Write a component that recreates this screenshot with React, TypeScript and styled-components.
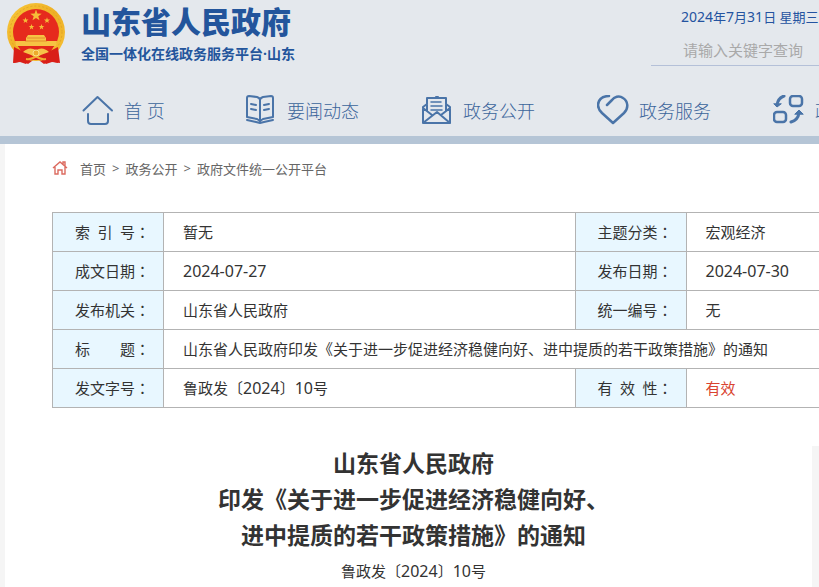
import React from 'react';
import styled, { createGlobalStyle } from 'styled-components';

const GlobalStyle = createGlobalStyle`
  *, *::before, *::after { box-sizing: border-box; }
  html { min-height: 100%; background: #f5f5f5; }
  body {
    margin: 0;
    overflow-x: hidden;
    color: #333;
    font-family: "Noto Sans", "Noto Sans CJK SC", sans-serif;
    font-size: 15px;
  }
  a { color: inherit; text-decoration: none; }
`;

const Header = styled.header`
  height: 144px;
  overflow: hidden;
  background: #e4e8ed;
  border-bottom: 8px solid #b5c5d6;
`;

const Masthead = styled.div`
  display: flex;
  justify-content: space-between;
  height: 80px;
  padding-left: 6px;
`;

const Brand = styled.a`
  display: flex;
  gap: 15px;
  padding-top: 2px;
  color: #23559c;
`;

const BrandText = styled.span`
  display: flex;
  flex-direction: column;
  white-space: nowrap;
`;

const BrandName = styled.strong`
  font-size: 30px;
  line-height: 40px;
  font-weight: 900;
`;

const BrandTagline = styled.span`
  font-size: 14px;
  line-height: 24px;
  font-weight: 700;
`;

const Tools = styled.div`
  width: 168px;
`;

const Today = styled.time`
  display: block;
  padding-left: 30px;
  color: #2453a0;
  font-size: 13px;
  line-height: 34px;
  white-space: nowrap;
`;

const DateFigures = styled.span`
  font-size: 14px;
`;

const SearchForm = styled.form`
  display: flex;
`;

const SearchInput = styled.input`
  width: 100%;
  height: 32px;
  padding: 0 0 0 32px;
  border: 0;
  border-bottom: 1px solid #b4c0d8;
  outline: 0;
  background: transparent;
  font: inherit;
  &::placeholder { color: #a9a9a9; opacity: 1; }
`;

const Nav = styled.nav`
  display: flex;
  gap: 62px;
  padding: 15px 0 0 82px;
`;

const NavItem = styled.a`
  display: flex;
  flex: none;
  align-items: center;
  gap: 10px;
  min-width: 101px;
  color: #3b659b;
  font-size: 18px;
  line-height: 32px;
  font-weight: 300;
  white-space: nowrap;
`;

const NavSvg = styled.svg`
  width: 32px;
  height: 32px;
  fill: none;
  stroke: #4a74a8;
  stroke-width: 2;
  stroke-linecap: round;
  stroke-linejoin: round;
`;

const Page = styled.div`
  min-height: 443px;
  margin-left: 5px;
  background: #fff;
`;

const Breadcrumb = styled.nav`
  display: flex;
  align-items: center;
  gap: 6px;
  height: 48px;
  padding-left: 47px;
  color: #666;
  font-size: 13px;
`;

const CrumbIcon = styled.svg`
  width: 16px;
  height: 16px;
  margin-right: 6px;
  fill: none;
  stroke: #dc6b60;
  stroke-width: 1.4;
`;

const InfoTable = styled.table`
  width: calc(100% - 47px);
  margin: 20px 0 0 47px;
  border-collapse: collapse;
  table-layout: fixed;
`;

const LabelCol = styled.col`
  width: 111px;
`;

const SideCol = styled.col`
  width: 133px;
`;

const LabelCell = styled.th`
  height: 39px;
  padding: 0 0 0 22px;
  border: 1px solid #b3b3b3;
  background: #e8f7ff;
  font-weight: 400;
  text-align: left;
  white-space: nowrap;
  line-height: 22px;
`;

const Colon = styled.span`
  font-family: "Noto Sans CJK TC", sans-serif;
`;

const Value = styled.td<{ $valid?: boolean }>`
  padding: 0 0 0 19px;
  border: 1px solid #b3b3b3;
  color: ${p => (p.$valid ? '#d9432f' : '#333')};
  white-space: nowrap;
  line-height: 22px;
  &:last-child { border-right: 0; }
`;

const Figures = styled.span`
  font-size: 16px;
`;

const Body = styled.div`
  display: flex;
  min-height: 141px;
  margin-top: 38px;
`;

const Article = styled.article`
  flex: 1;
  padding-left: 10px;
  text-align: center;
`;

const Title = styled.h1`
  margin: -1px 0 0;
  font-size: 23px;
  line-height: 36px;
  font-weight: 700;
`;

const DocNumber = styled.p`
  margin: 6px 0 0;
  line-height: 24px;
`;

const SidePanel = styled.aside`
  width: 7px;
  background: #f5f5f5;
`;

const star = (cx: number, cy: number, r: number) =>
  Array.from({ length: 10 }, (_, i) => {
    const a = -Math.PI / 2 + (i * Math.PI) / 5;
    const d = i % 2 ? r * 0.4 : r;
    return `${cx + d * Math.cos(a)},${cy + d * Math.sin(a)}`;
  }).join(' ');

const Emblem = () => (
  <svg width="60" height="64" viewBox="0 0 60 64" aria-hidden="true">
    <defs>
      <linearGradient id="gold" x1="0" y1="0" x2="1" y2="1">
        <stop offset="0" stopColor="#f8c83a" />
        <stop offset="0.5" stopColor="#eeb025" />
        <stop offset="1" stopColor="#f6c136" />
      </linearGradient>
    </defs>
    <path d="M9 44 L8 61 L17 59 L22 62 L30 56 L38 62 L44 59 L52 61 L51 44 Z" fill="#dc2018" />
    <circle cx="30" cy="30" r="29" fill="url(#gold)" />
    <circle cx="30" cy="30" r="26" fill="none" stroke="#e3a526" strokeWidth="1" strokeDasharray="2 2" />
    <circle cx="30" cy="30" r="23" fill="#e62a1d" />
    <g fill="#f5bd38">
      <polygon points={star(30, 13.5, 6)} />
      <polygon points={star(19.5, 18.5, 3.2)} />
      <polygon points={star(41, 18.5, 3.2)} />
      <polygon points={star(25.5, 25, 3)} />
      <polygon points={star(35.5, 25, 3)} />
    </g>
    <path d="M22 33 H38 L40 36 H40 V39 H51 L50 44 H10 L9 39 H20 V36 Z" fill="#f6c343" />
    <path d="M21 36 H39 M19 39 H41" stroke="#d9641f" strokeWidth="0.6" />
    <path d="M12 44 H48 L45 49 H15 Z" fill="#e3271a" />
    <path d="M8 45 L16 49 L23 47 L30 50 L37 47 L44 49 L52 45 L54 61 L46 60 L40 62 L36 58 H24 L20 62 L14 60 L7 61 Z" fill="#d91f18" />
    <path d="M17 50 Q23 44 30 48 Q37 44 43 50 Q36 52 30 56 Q24 52 17 50 Z" fill="#f6c348" />
    <path d="M20 57 Q26 58 30 54 Q34 58 40 57" fill="none" stroke="#f0ad30" strokeWidth="2" />
    <circle cx="30" cy="51" r="3" fill="#edaa2c" stroke="#fae08a" />
  </svg>
);

const HomeIcon = () => (
  <NavSvg viewBox="0 0 32 32" aria-hidden="true">
    <path d="M1.5 15.5 L15.5 2 L30 15.5 M6 19 V26 Q6 29 9 29 H23 Q26 29 26 26 V19" />
  </NavSvg>
);

const BookIcon = () => (
  <NavSvg viewBox="0 0 32 32" aria-hidden="true">
    <path d="M2 3 Q2 1 4 1 L12 2 Q15 3 15 5 Q15 3 18 2 L26 1 Q28 1 28 3 V22 L18 24 L15 26 L12 24 L2 22 Z M15 5 V25 M2 25 L11 27 L15 28 L19 27 L28 25" />
    <path d="M6 9 L11 10 M6 14 L11 15 M24 9 L19 10 M24 14 L19 15" />
  </NavSvg>
);

const LetterIcon = () => (
  <NavSvg viewBox="0 0 32 32" aria-hidden="true">
    <path d="M6 16 V3 H25 V16 M15 2 H17 M6 9 L2 12 V28 H29 V12 L25 9 M2 13 L11 20 M29 13 L20 20 M2 28 L16 17 L29 28" />
    <path d="M10 7 H20 M10 11 H21 M10 15 H21" strokeWidth="1.5" />
  </NavSvg>
);

const HeartIcon = () => (
  <NavSvg viewBox="0 0 32 32" aria-hidden="true">
    <path strokeWidth="2.5" d="M12 1 C4 1 1 6 1 10 C1 14 3 16 5 18 L16 28 L27 18 C32 13 31 6 26 3 C22 0 17 2 15 5 L10 10" />
  </NavSvg>
);

const ExchangeIcon = () => (
  <NavSvg viewBox="0 0 32 32" aria-hidden="true">
    <rect x="17" y="1" width="12" height="10" rx="3" strokeWidth="2.5" />
    <rect x="1" y="17" width="12" height="10" rx="3" strokeWidth="2.5" />
    <path d="M11 1 Q5 3 4 10 M18 27 Q25 25 26 18" strokeWidth="3" />
    <path d="M1 9 L4 12 L8 9 Z M22 19 L26 15 L30 19 Z" fill="#4a74a8" strokeWidth="1" />
  </NavSvg>
);

const navItems = [
  { label: '首 页', Icon: HomeIcon },
  { label: '要闻动态', Icon: BookIcon },
  { label: '政务公开', Icon: LetterIcon },
  { label: '政务服务', Icon: HeartIcon },
  { label: '政', Icon: ExchangeIcon },
];

const Label = ({ text }: { text: string }) => (
  <LabelCell scope="row">
    {text}
    <Colon>：</Colon>
  </LabelCell>
);

export default function App() {
  return (
    <>
      <GlobalStyle />
      <Header>
        <Masthead>
          <Brand href="#">
            <Emblem />
            <BrandText>
              <BrandName>山东省人民政府</BrandName>
              <BrandTagline>全国一体化在线政务服务平台·山东</BrandTagline>
            </BrandText>
          </Brand>
          <Tools>
            <Today dateTime="2024-07-31">
              <DateFigures>2024</DateFigures>年<DateFigures>7</DateFigures>月<DateFigures>31</DateFigures>日 星期三
            </Today>
            <SearchForm>
              <SearchInput type="search" placeholder="请输入关键字查询" aria-label="请输入关键字查询" />
            </SearchForm>
          </Tools>
        </Masthead>
        <Nav>
          {navItems.map(({ label, Icon }) => (
            <NavItem href="#" key={label}>
              <Icon />
              <span>{label}</span>
            </NavItem>
          ))}
        </Nav>
      </Header>
      <Page>
        <Breadcrumb>
          <CrumbIcon viewBox="0 0 16 16" aria-hidden="true">
            <path d="M1 8 L8 2 L15 8 M11 4 V2 H13 V6 M3 7 V14 H6 V10 H10 V14 H13 V7" />
          </CrumbIcon>
          <a href="#">首页</a>
          <span>&gt;</span>
          <a href="#">政务公开</a>
          <span>&gt;</span>
          <a href="#">政府文件统一公开平台</a>
        </Breadcrumb>
        <InfoTable>
          <colgroup>
            <LabelCol />
            <col />
            <LabelCol />
            <SideCol />
          </colgroup>
          <tbody>
            <tr>
              <Label text={'索\u2002引\u2002号'} />
              <Value>暂无</Value>
              <Label text="主题分类" />
              <Value>宏观经济</Value>
            </tr>
            <tr>
              <Label text="成文日期" />
              <Value><Figures>2024-07-27</Figures></Value>
              <Label text="发布日期" />
              <Value><Figures>2024-07-30</Figures></Value>
            </tr>
            <tr>
              <Label text="发布机关" />
              <Value>山东省人民政府</Value>
              <Label text="统一编号" />
              <Value>无</Value>
            </tr>
            <tr>
              <Label text={'标\u2003\u2003题'} />
              <Value colSpan={3}>山东省人民政府印发《关于进一步促进经济稳健向好、进中提质的若干政策措施》的通知</Value>
            </tr>
            <tr>
              <Label text="发文字号" />
              <Value>鲁政发〔<Figures>2024</Figures>〕<Figures>10</Figures>号</Value>
              <Label text={'有\u2002效\u2002性'} />
              <Value $valid>有效</Value>
            </tr>
          </tbody>
        </InfoTable>
        <Body>
          <Article>
            <Title>
              山东省人民政府<br />
              印发《关于进一步促进经济稳健向好、<br />
              进中提质的若干政策措施》的通知
            </Title>
            <DocNumber>鲁政发〔<Figures>2024</Figures>〕<Figures>10</Figures>号</DocNumber>
          </Article>
          <SidePanel />
        </Body>
      </Page>
    </>
  );
}
